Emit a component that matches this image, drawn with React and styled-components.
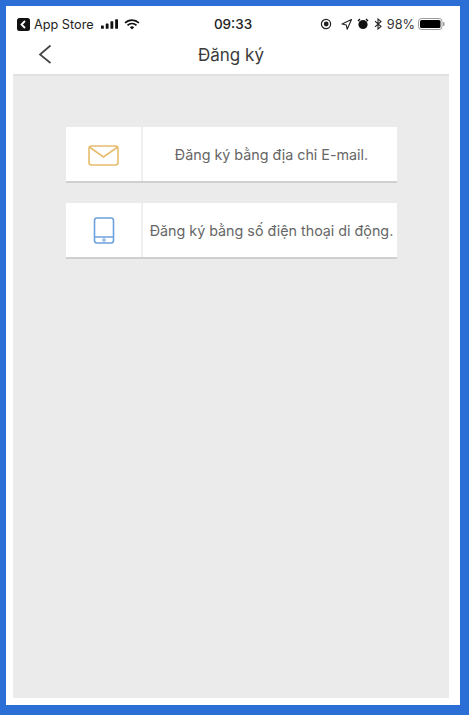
import React from "react";
import styled, { createGlobalStyle } from "styled-components";

const Global = createGlobalStyle`
  html, body { margin: 0; padding: 0; background: #2b6fd6; }
  #root { width: 469px; height: 715px; }
`;
const Frame = styled.div`
  box-sizing: border-box;
  width: 469px;
  height: 715px;
  padding: 6px 9px 10px 6px;
  background: #2b6fd6;
  font-family: Inter, "Noto Sans", sans-serif;
`;
const Phone = styled.div`
  box-sizing: border-box;
  height: 100%;
  padding: 0 11px 7px 7px;
  background: #fff;
  display: flex;
  flex-direction: column;
`;
const StatusBar = styled.div`
  height: 36px;
  padding: 0 4px;
  display: grid;
  grid-template-columns: 1fr auto 1fr;
  align-items: center;
  color: #222;
  font-size: 12.7px;
`;
const StatusLeft = styled.div`
  display: flex;
  align-items: center;
  gap: 4px;
`;
const Signal = styled.svg`
  margin-left: 3px;
`;
const Wifi = styled.svg`
  margin-left: 2px;
`;
const StatusRight = styled.div`
  display: flex;
  align-items: center;
  justify-content: flex-end;
  gap: 5px;
  color: #333;
`;
const Orientation = styled.svg`
  margin-right: 4px;
`;
const Battery = styled.svg`
  margin-left: -2px;
`;
const Time = styled.div`
  font-weight: 500;
  font-size: 13.5px;
  padding-left: 4px;
`;
const NavBar = styled.div`
  box-sizing: border-box;
  height: 32px;
  padding-bottom: 7px;
  display: flex;
  align-items: center;
  justify-content: center;
  position: relative;
  font-size: 17px;
  color: #3a3a3a;
`;
const Back = styled.svg`
  position: absolute;
  left: 25px;
  top: 2px;
`;
const Content = styled.div`
  flex: 1;
  background: #ebebeb;
  border-top: 2px solid #e1e1e1;
  padding: 51px 52px 0 53px;
  display: flex;
  flex-direction: column;
  gap: 20px;
`;
const Card = styled.div`
  height: 56px;
  box-sizing: border-box;
  background: #fff;
  border-bottom: 2px solid #cfcfcf;
  display: grid;
  grid-template-columns: 77px 1fr;
`;
const IconCell = styled.div`
  display: flex;
  align-items: center;
  justify-content: center;
  padding-top: ${(p) => p.$nudge || 0}px;
  border-right: 2px solid #efefef;
`;
const Label = styled.div`
  display: flex;
  align-items: center;
  justify-content: center;
  padding-left: 3px;
  font-size: 14.3px;
  color: #666;
  white-space: nowrap;
`;

export default function App() {
  return (
    <Frame>
      <Global />
      <Phone>
        <StatusBar>
          <StatusLeft>
            <svg width="13" height="13" viewBox="0 0 13 13">
              <rect width="13" height="13" rx="2.5" fill="#111" />
              <path d="M8 3 4.5 6.5 8 10" stroke="#fff" strokeWidth="1.8" fill="none" />
            </svg>
            <span>App Store</span>
            <Signal width="17" height="10" viewBox="0 0 18 10">
              <rect x="0" y="6.5" width="3" height="3.5" rx=".6" fill="#111" />
              <rect x="5" y="4.5" width="3" height="5.5" rx=".6" fill="#111" />
              <rect x="10" y="2" width="3" height="8" rx=".6" fill="#111" />
              <rect x="15" y="0" width="3" height="10" rx=".6" fill="#111" />
            </Signal>
            <Wifi width="16" height="11" viewBox="0 0 16 11">
              <path d="M1 4a10 10 0 0 1 14 0M3.5 6.3a6.5 6.5 0 0 1 9 0" stroke="#111" strokeWidth="1.7" fill="none" />
              <path d="M5.8 8.2a3.2 3.2 0 0 1 4.4 0L8 10.6z" fill="#111" />
            </Wifi>
          </StatusLeft>
          <Time>09:33</Time>
          <StatusRight>
            <Orientation width="12" height="12" viewBox="0 0 12 12">
              <circle cx="6" cy="6" r="4.6" stroke="#222" strokeWidth="1.2" fill="none" />
              <circle cx="6.2" cy="6" r="2.4" fill="#222" />
            </Orientation>
            <svg width="11" height="11" viewBox="0 0 11 11">
              <path d="M10.5.5 1 5l4.3 1 .9 4.3z" stroke="#222" strokeWidth="1.1" fill="none" strokeLinejoin="round" />
            </svg>
            <svg width="12" height="12" viewBox="0 0 12 12">
              <circle cx="6" cy="6.5" r="4.6" fill="#111" />
              <path d="M1 3 3 1M11 3 9 1" stroke="#111" strokeWidth="1.4" />
            </svg>
            <svg width="8" height="12" viewBox="0 0 8 12">
              <path d="M1 3.2 7 8.6 4 11V1l3 2.4L1 8.8" stroke="#222" strokeWidth="1.1" fill="none" />
            </svg>
            <span>98%</span>
            <Battery width="27" height="12" viewBox="0 0 27 12">
              <rect x=".5" y=".5" width="23.5" height="11" rx="3" stroke="#999" fill="none" />
              <rect x="2" y="2" width="20.5" height="8" rx="1.6" fill="#000" />
              <rect x="25" y="4" width="1.5" height="4" rx=".7" fill="#999" />
            </Battery>
          </StatusRight>
        </StatusBar>
        <NavBar>
          <Back width="14" height="20" viewBox="0 0 14 20">
            <path d="M12.5 1.5 2 10.5 12.5 19" stroke="#444" strokeWidth="1.7" fill="none" />
          </Back>
          Đăng ký
        </NavBar>
        <Content>
          <Card>
            <IconCell $nudge={2}>
              <svg width="32" height="21" viewBox="0 0 32 21">
                <rect x="1" y="1" width="29" height="19" rx="2.5" stroke="#e6bc6c" strokeWidth="1.6" fill="none" />
                <path d="M2 2.5 15.5 12 29 2.5" stroke="#e6bc6c" strokeWidth="1.6" fill="none" />
              </svg>
            </IconCell>
            <Label>Đăng ký bằng địa chỉ E-mail.</Label>
          </Card>
          <Card>
            <IconCell>
              <svg width="22" height="27" viewBox="0 0 22 27">
                <rect x="1.5" y="1" width="19" height="25" rx="2.5" stroke="#6ba2dc" strokeWidth="1.6" fill="none" />
                <path d="M2 20h18" stroke="#6ba2dc" strokeWidth="1.5" />
                <circle cx="11" cy="23" r="1.3" stroke="#6ba2dc" fill="none" />
              </svg>
            </IconCell>
            <Label>Đăng ký bằng số điện thoại di động.</Label>
          </Card>
        </Content>
      </Phone>
    </Frame>
  );
}
